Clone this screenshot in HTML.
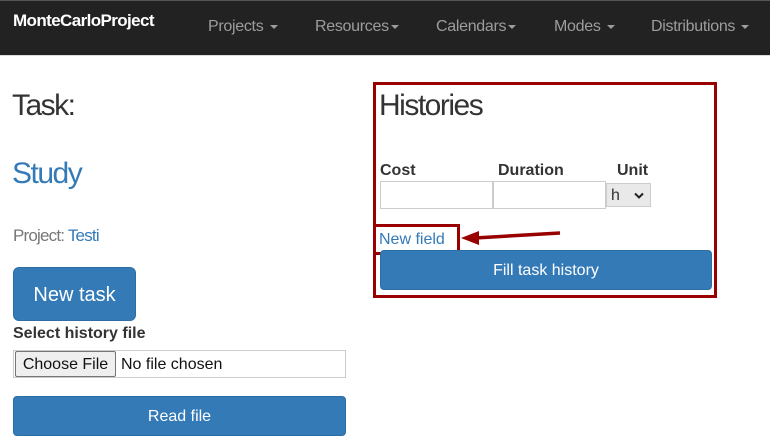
<!DOCTYPE html>
<html><head><meta charset="utf-8"><style>
*{box-sizing:border-box;margin:0;padding:0}
body{width:770px;height:446px;background:#fff;font-family:"Liberation Sans",sans-serif;position:relative;overflow:hidden;color:#333}
.a{position:absolute;white-space:nowrap}
.nav{position:absolute;left:0;top:0;width:770px;height:56px;background:#222;border-top:1px solid #555;border-bottom:1px solid #ddd}
.ni{position:absolute;top:17px;font-size:16px;color:#9d9d9d;letter-spacing:-0.3px}
.car{display:inline-block;width:0;height:0;border-left:4px solid transparent;border-right:4px solid transparent;border-top:4px solid #9d9d9d;vertical-align:middle;margin-left:2px}
.btn{position:absolute;background:#337ab7;color:#fff;border:1px solid #2e6da4;border-radius:4px;text-align:center}
.inp{position:absolute;border:1px solid #ccc;background:#fff}
.lbl{position:absolute;font-weight:bold;font-size:16px;color:#333}
</style></head><body>
<div class="nav">
<div class="a" style="left:13px;top:10px;font-size:17px;font-weight:bold;color:#fff;letter-spacing:-0.6px">MonteCarloProject</div>
<div class="ni" style="left:208px">Projects <span class="car"></span></div>
<div class="ni" style="left:315px">Resources<span class="car"></span></div>
<div class="ni" style="left:436px">Calendars<span class="car"></span></div>
<div class="ni" style="left:554px">Modes <span class="car"></span></div>
<div class="ni" style="left:651px">Distributions <span class="car"></span></div>
</div>
<div class="a" style="left:12px;top:89px;font-size:30px;letter-spacing:-1.5px;color:#333">Task:</div>
<div class="a" style="left:12px;top:157px;font-size:30px;letter-spacing:-1.5px;color:#337ab7">Study</div>
<div class="a" style="left:13px;top:226px;font-size:17px;letter-spacing:-0.8px;color:#777">Project: <span style="color:#337ab7">Testi</span></div>
<div class="btn" style="left:13px;top:267px;width:123px;height:54px;border-radius:6px;font-size:20px;line-height:54px">New task</div>
<div class="lbl" style="left:13px;top:325px">Select history file</div>
<div class="inp" style="left:13px;top:350px;width:333px;height:28px"></div>
<div class="a" style="left:15px;top:351px;width:101px;height:26px;background:#efefef;border:1px solid #767676;border-radius:2px;font-size:16px;line-height:25px;text-align:center;color:#111">Choose File</div>
<div class="a" style="left:121px;top:356px;font-size:16px;color:#111">No file chosen</div>
<div class="btn" style="left:13px;top:396px;width:333px;height:40px;font-size:16px;line-height:39px">Read file</div>

<div class="a" style="left:373px;top:82px;width:344px;height:216px;border:3px solid #990000"></div>
<div class="a" style="left:379px;top:89px;font-size:30px;letter-spacing:-1.5px;color:#333">Histories</div>
<div class="lbl" style="left:380px;top:162px">Cost</div>
<div class="lbl" style="left:498px;top:162px">Duration</div>
<div class="lbl" style="left:617px;top:162px">Unit</div>
<div class="inp" style="left:380px;top:181px;width:113px;height:28px"></div>
<div class="inp" style="left:493px;top:181px;width:113px;height:28px"></div>
<div class="a" style="left:606px;top:183px;width:45px;height:24px;background:#e9e9e9;border:1px solid #ccc;font-size:16px;line-height:23px;padding-left:4px;color:#333">h<svg style="position:absolute;left:27px;top:8px" width="10" height="7" viewBox="0 0 10 7"><path d="M1 1.5 L5 5.5 L9 1.5" stroke="#222" stroke-width="2" fill="none"/></svg></div>
<div class="a" style="left:379px;top:231px;font-size:16px;color:#337ab7">New field</div>
<div class="a" style="left:373px;top:224px;width:87px;height:31px;border:3px solid #990000"></div>
<svg class="a" style="left:455px;top:222px" width="110" height="25" viewBox="0 0 110 25"><path d="M105 11 L20 16" stroke="#990000" stroke-width="3.5"/><path d="M6 16 L24 9 L24 23 Z" fill="#990000"/></svg>
<div class="btn" style="left:380px;top:250px;width:332px;height:40px;font-size:16px;line-height:39px">Fill task history</div>
</body></html>
